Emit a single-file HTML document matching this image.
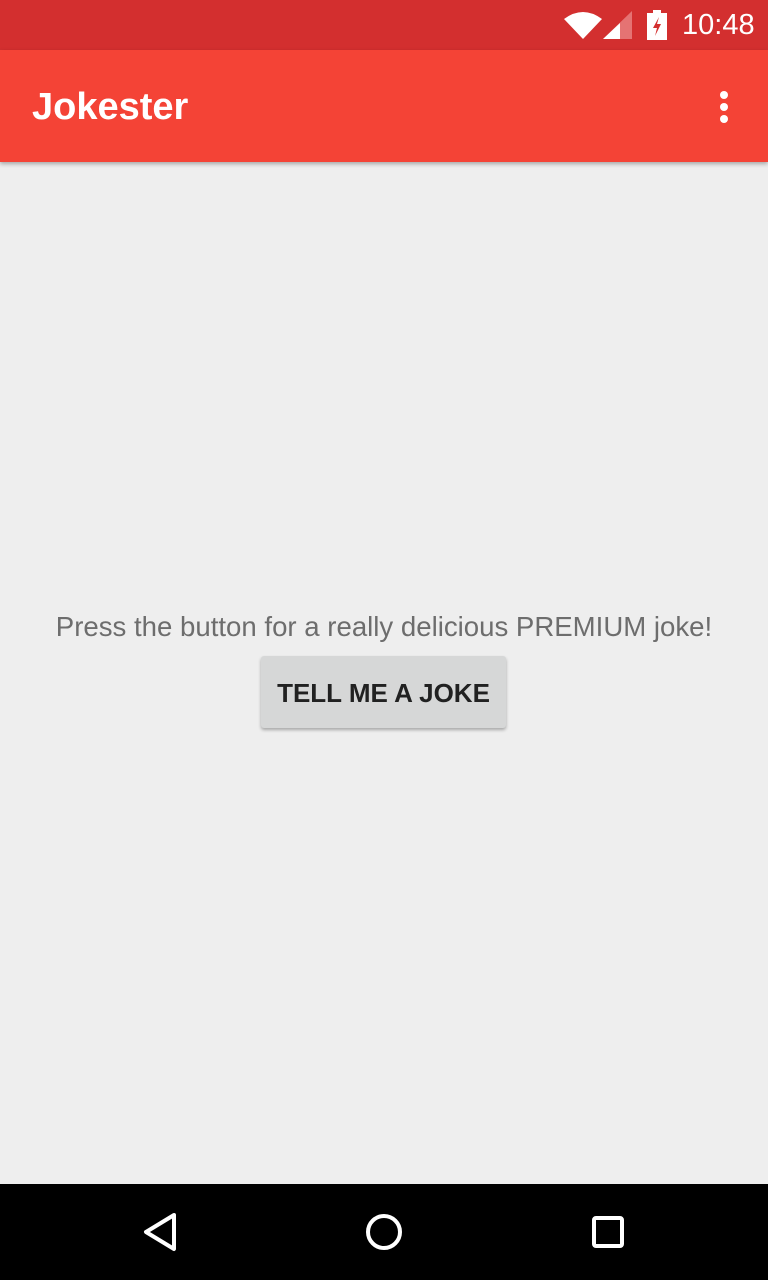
<!DOCTYPE html>
<html><head><meta charset="utf-8"><style>
body{margin:0;width:768px;height:1280px;background:#eeeeee;font-family:"Liberation Sans",sans-serif;position:relative;overflow:hidden}
.sb{position:absolute;top:0;left:0;width:768px;height:50px;background:#d32f2f}
.ab{position:absolute;top:50px;left:0;width:768px;height:112px;background:#f44336;box-shadow:0 2px 4px rgba(0,0,0,.3)}
.title{position:absolute;left:32px;top:86px;color:#fff;font-size:38px;font-weight:bold;letter-spacing:0}
.time{position:absolute;left:682px;top:9px;color:#fff;font-size:29px}
.msg{position:absolute;top:611px;left:0;width:768px;text-align:center;color:#6d6d6d;font-size:27.6px}
.btn{position:absolute;left:261px;top:656px;width:245px;height:72px;background:#d6d7d7;border-radius:3px;box-shadow:0 2px 3px rgba(0,0,0,.3);color:#212121;font-size:26px;font-weight:bold;text-align:center;line-height:74px}
.nav{position:absolute;top:1184px;left:0;width:768px;height:96px;background:#000}
</style></head><body>
<div class="sb">
<svg style="position:absolute;left:564px;top:11px" width="38" height="28" viewBox="0 0 38 28"><path d="M0 8 Q19 -6 38 8 L19 28 Z" fill="#fff"/></svg>
<svg style="position:absolute;left:603px;top:11px" width="29" height="28"><path d="M0 28 L29 0 V28 Z" fill="#e57373"/><path d="M0 28 L17 12 V28 Z" fill="#fff"/></svg>
<svg style="position:absolute;left:647px;top:10px" width="20" height="30"><path d="M6 0h8v3h6v27H0V3h6z" fill="#fff"/><path d="M12 7 L6 18 H10 L8 26 L14 14 H10 Z" fill="#d32f2f"/></svg>
<div class="time">10:48</div>
</div>
<div class="ab"></div>
<div class="title">Jokester</div>
<svg style="position:absolute;left:718px;top:90px" width="12" height="34"><circle cx="6" cy="5" r="4" fill="#fff"/><circle cx="6" cy="17" r="4" fill="#fff"/><circle cx="6" cy="29" r="4" fill="#fff"/></svg>
<div class="msg">Press the button for a really delicious PREMIUM joke!</div>
<div class="btn">TELL ME A JOKE</div>
<div class="nav">
<svg style="position:absolute;left:140px;top:28px" width="40" height="40"><path d="M34 3 L6 20 L34 37 Z" fill="none" stroke="#fff" stroke-width="4" stroke-linejoin="round"/></svg>
<svg style="position:absolute;left:364px;top:28px" width="40" height="40"><circle cx="20" cy="20" r="16" fill="none" stroke="#fff" stroke-width="4"/></svg>
<svg style="position:absolute;left:590px;top:30px" width="36" height="36"><rect x="4" y="4" width="28" height="28" rx="2" fill="none" stroke="#fff" stroke-width="4"/></svg>
</div>
</body></html>
